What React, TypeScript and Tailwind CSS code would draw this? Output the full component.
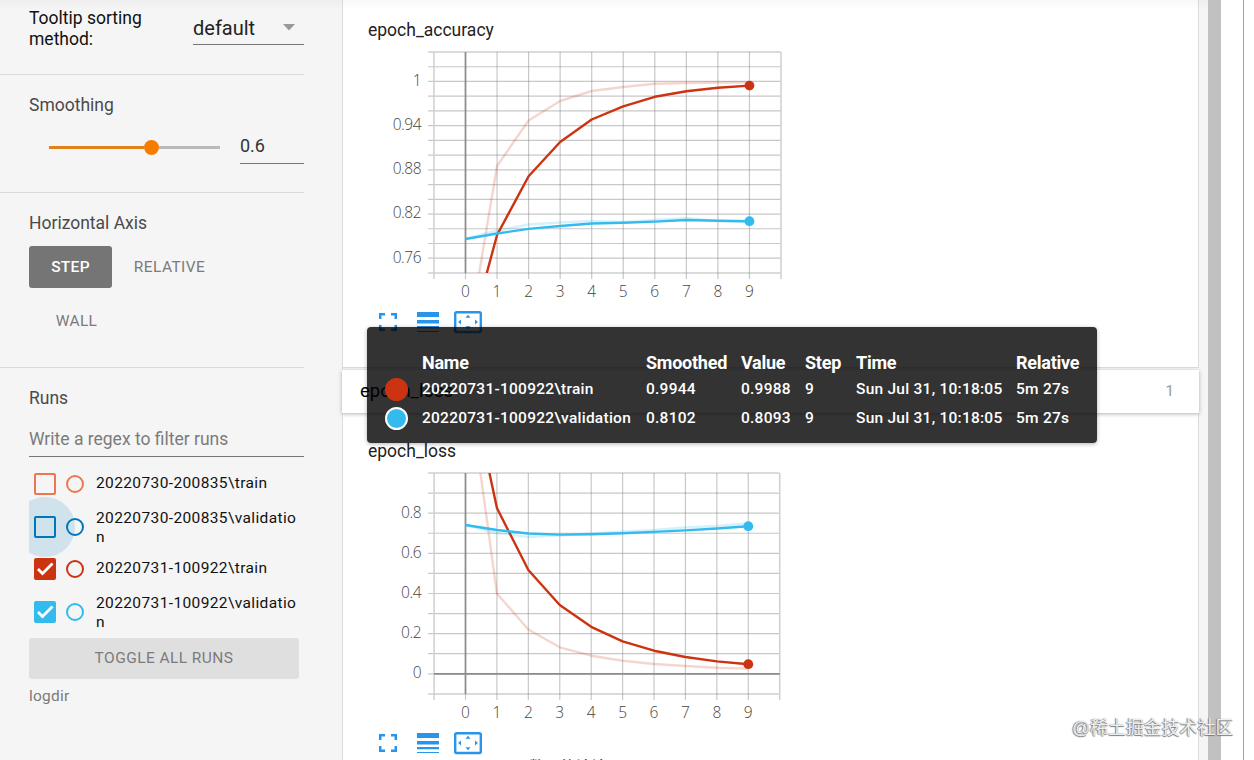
import { useId } from 'react';

// y positions of each series, in pixels from the top of the plot, one per epoch
const accuracy = {
  id: 'epoch_accuracy',
  step: 31.55,
  rows: 15,
  rowHeight: 14.73,
  ticks: [
    { label: '1', y: 29.3 },
    { label: '0.94', y: 73.5 },
    { label: '0.88', y: 117.7 },
    { label: '0.82', y: 161.9 },
    { label: '0.76', y: 206.1 },
  ],
  zero: null,
  series: [
    { color: '#cc3311', faint: true, ys: [303, 114, 68.5, 49, 39, 35, 31.7, 31, 30.5, 30.2] },
    { color: '#33bbee', faint: true, ys: [187, 178.5, 172.5, 170.5, 169, 170, 168, 166, 169, 170] },
    { color: '#cc3311', faint: false, ys: [300, 183, 124.3, 90, 67.5, 54.3, 44.8, 39.2, 35.8, 33.6] },
    { color: '#33bbee', faint: false, ys: [187, 181.5, 176.9, 174, 171.5, 170.8, 169.6, 168, 168.7, 169.2] },
  ],
};

const loss = {
  id: 'epoch_loss',
  step: 31.42,
  rows: 11,
  rowHeight: 20.08,
  ticks: [
    { label: '0.8', y: 40.2 },
    { label: '0.6', y: 80.3 },
    { label: '0.4', y: 120.5 },
    { label: '0.2', y: 160.6 },
    { label: '0', y: 200.8 },
  ],
  zero: 200.8,
  series: [
    { color: '#cc3311', faint: true, ys: [-110, 120.5, 156.5, 174.3, 182.7, 187.8, 191, 193, 194.7, 195.6] },
    { color: '#33bbee', faint: true, ys: [52, 60, 64, 62.5, 60.5, 58.5, 57, 54.5, 53, 50.5] },
    { color: '#cc3311', faint: false, ys: [-112, 35, 97, 132, 153.8, 168.3, 177.7, 184, 188.4, 191.2] },
    { color: '#33bbee', faint: false, ys: [52, 57, 60.5, 61.6, 61.2, 60.2, 58.9, 57.4, 55.5, 53.2] },
  ],
};

const runs = [
  { name: '20220730-200835\\train', color: '#ee7752', checked: false, ripple: false, height: 'h-[35px]' },
  { name: '20220730-200835\\validation', color: '#0077bb', checked: false, ripple: true, height: 'h-[50px]' },
  { name: '20220731-100922\\train', color: '#cc3311', checked: true, ripple: false, height: 'h-[35px]' },
  { name: '20220731-100922\\validation', color: '#33bbee', checked: true, ripple: false, height: 'h-[50px]' },
];

const points = [
  { color: '#cc3311', ring: false, name: '20220731-100922\\train', smoothed: '0.9944', value: '0.9988' },
  { color: '#33bbee', ring: true, name: '20220731-100922\\validation', smoothed: '0.8102', value: '0.8093' },
];

function Chart({ data }: { data: typeof accuracy | typeof loss }) {
  const clip = useId();
  const left = 66;
  const top = 8;
  const origin = 97.5;
  const bottom = top + data.rows * data.rowHeight;
  const right = origin + data.step * 10;

  return (
    <svg className="block font-['Open_Sans',sans-serif]" width="430" height="265">
      <clipPath id={clip}>
        <rect x={left} y={top} width={right - left + 8} height={bottom - top} />
      </clipPath>
      {Array.from({ length: data.rows + 1 }, (_, i) => {
        const y = top + i * data.rowHeight;
        const edge = i === 0 || i === data.rows;
        return (
          <line key={i} x1={left - 6} x2={right} y1={y} y2={y} stroke={edge ? '#cfcfcf' : '#808080'} strokeOpacity={edge ? 1 : 0.43} strokeWidth={edge ? 1.5 : 1.2} />
        );
      })}
      {Array.from({ length: 12 }, (_, i) => {
        const x = origin + (i - 1) * data.step;
        const edge = i === 0 || i === 11;
        return (
          <line key={i} x1={x} x2={x} y1={top} y2={bottom + 6} stroke={edge ? '#cfcfcf' : '#808080'} strokeOpacity={edge ? 1 : 0.43} strokeWidth={edge ? 1.5 : 1.2} />
        );
      })}
      <line x1={origin} x2={origin} y1={top} y2={bottom} stroke="#8c8c8c" strokeWidth="1.7" />
      {data.zero !== null && (
        <line x1={left} x2={right} y1={top + data.zero} y2={top + data.zero} stroke="#8c8c8c" strokeWidth="1.7" />
      )}
      <g clipPath={`url(#${clip})`}>
        {data.series.map((s, i) => (
          <polyline
            key={i}
            points={s.ys.map((y, x) => `${origin + x * data.step},${top + y}`).join(' ')}
            fill="none"
            stroke={s.color}
            strokeOpacity={s.faint ? 0.2 : 1}
            strokeWidth="2.4"
            strokeLinejoin="round"
          />
        ))}
      </g>
      {data.series
        .filter((s) => !s.faint)
        .map((s) => (
          <circle key={s.color} cx={origin + 9 * data.step} cy={top + s.ys[9]} r="4.9" fill={s.color} />
        ))}
      {data.ticks.map((t) => (
        <text key={t.label} x="53" y={top + t.y + 4.5} textAnchor="end" className="fill-[#444] text-[15.5px] font-light tracking-[-0.5px]">
          {t.label}
        </text>
      ))}
      {Array.from({ length: 10 }, (_, i) => (
        <text key={i} x={origin + i * data.step} y="253" textAnchor="middle" className="fill-[#444] text-[15.5px] font-light">
          {i}
        </text>
      ))}
    </svg>
  );
}

function ChartActions() {
  return (
    <div className="mt-px flex h-6 items-center pl-[10px] text-[#2894ea]">
      <svg width="20" height="20" viewBox="0 0 20 20" fill="none" stroke="currentColor" strokeWidth="2.5">
        <path d="M2.2 7V2.2H7M13 2.2h4.8V7M17.8 13v4.8H13M7 17.8H2.2V13" />
      </svg>
      <svg className="ml-[19px]" width="22" height="22" viewBox="0 0 22 22" fill="currentColor">
        <path d="M0 1h22v5H0zM0 9h22v3.5H0zM0 15h22v2.3H0zM0 20h22v1H0z" />
      </svg>
      <svg className="ml-[15px]" width="28" height="24" viewBox="0 0 28 24">
        <rect x="1.2" y="2.2" width="25.6" height="19.8" rx="1.6" fill="none" stroke="currentColor" strokeWidth="2.4" />
        <path d="M14 4.7l2.5 3h-5zM14 19.3l2.5-3h-5zM4 12l3-2.5v5zM24 12l-3-2.5v5z" fill="currentColor" />
      </svg>
    </div>
  );
}

function Sidebar() {
  return (
    <aside className="h-full w-[343px] shrink-0 border-r border-[#dcdcdc] bg-[#f5f5f5] text-[17.5px] text-[#4a4a4a]">
      <div className="flex h-[75px] w-[304px] justify-between border-b border-[#dadada] pl-[29px] pt-[8px]">
        <div className="w-[125px] leading-[21px] text-[#111]">Tooltip sorting method:</div>
        <div className="flex h-[37px] w-[111px] items-center justify-between border-b border-[#777] pr-[8px] text-[20px] text-[#222]">
          <span className="pt-[3px]">default</span>
          <svg className="mt-[3px]" width="14" height="7" viewBox="0 0 14 7">
            <path d="M1 0h12L7 6.5z" fill="#999" />
          </svg>
        </div>
      </div>
      <div className="h-[118px] w-[304px] border-b border-[#dadada] pl-[29px] pt-[19px]">
        <h3 className="leading-[22px]">Smoothing</h3>
        <div className="mt-[11px] flex h-[37px] items-end justify-between pl-[20px]">
          <div className="mb-[9px] flex h-[15px] items-center">
            <div className="h-[3px] w-[95px] bg-[#e2811b]" />
            <div className="size-[15px] rounded-full bg-[#f57c00]" />
            <div className="h-[3px] w-[61px] bg-[#bababa]" />
          </div>
          <div className="h-[30px] w-[64px] border-b border-[#777] text-[18px] leading-[24px] text-[#333]">0.6</div>
        </div>
      </div>
      <div className="h-[175px] w-[304px] border-b border-[#dadada] pl-[29px] pt-[19px]">
        <h3 className="leading-[22px]">Horizontal Axis</h3>
        <div className="mt-[12px] flex flex-wrap text-[15.5px] text-[#7b7b7b]">
          <button className="h-[42px] w-[83px] rounded-[3px] bg-[#757575] pt-px font-medium tracking-[0.3px] text-white">STEP</button>
          <button className="h-[42px] w-[115px] pt-px tracking-[0.4px]">RELATIVE</button>
          <button className="mt-[12px] h-[42px] w-[95px] pt-px tracking-[0.3px]">WALL</button>
        </div>
      </div>
      <div className="pl-[29px] pt-[19px]">
        <h3 className="leading-[22px]">Runs</h3>
        <div className="mt-[18px] h-[30px] w-[275px] border-b border-[#777] leading-[24px] text-[#7b7b7b]">
          Write a regex to filter runs
        </div>
        <div className="mt-[9px] w-[275px]">
          {runs.map((run) => (
            <div key={run.name} className={`relative flex items-center ${run.height}`}>
              {run.ripple && (
                <div className="absolute left-0 top-[-4px] h-[60px] w-[46px] overflow-hidden">
                  <div className="ml-[-14px] size-[60px] rounded-full bg-[#d0e3ed]" />
                </div>
              )}
              <div
                className="relative ml-[5px] mt-px flex size-[22px] items-center justify-center rounded-[2px] border-2"
                style={{ borderColor: run.color, backgroundColor: run.checked ? run.color : 'transparent' }}
              >
                {run.checked && (
                  <svg className="shrink-0" width="20" height="20" viewBox="0 0 20 20" fill="none" stroke="white" strokeWidth="2.8">
                    <path d="M3 10l4.5 4.5L17.5 4.5" />
                  </svg>
                )}
              </div>
              <div className="relative ml-[10px] mt-px size-[18px] rounded-full border-2" style={{ borderColor: run.color }} />
              <div
                className={`relative ml-[12px] w-[203px] break-all text-[15.5px] leading-[19px] tracking-[0.38px] text-[#111] ${
                  run.height === 'h-[50px]' ? 'pt-[3px]' : ''
                }`}
              >
                {run.name}
              </div>
            </div>
          ))}
        </div>
        <button className="mt-[2px] h-[41px] w-[270px] rounded-[3px] bg-[#dfdfdf] pt-px text-[15.5px] tracking-[0.43px] text-[#7b7b7b]">
          TOGGLE ALL RUNS
        </button>
        <div className="mt-[7px] text-[15.5px] leading-[20px] tracking-[0.25px] text-[#7b7b7b]">logdir</div>
      </div>
    </aside>
  );
}

function Tooltip() {
  return (
    <div className="absolute left-[367px] top-[327px] z-20 h-[116px] w-[730px] rounded-[4px] bg-black/80 pl-[18px] pt-[24px] text-white shadow-[0_1px_4px_rgba(0,0,0,0.3)]">
      <div className="grid grid-cols-[37px_224px_95px_64px_51px_160px_auto] text-[15.5px] font-medium tracking-[0.25px]">
        <div className="contents text-[18px] font-bold leading-[24px] tracking-[-0.25px]">
          <span />
          <span>Name</span>
          <span>Smoothed</span>
          <span>Value</span>
          <span>Step</span>
          <span>Time</span>
          <span>Relative</span>
        </div>
        {points.map((p) => (
          <div key={p.name} className="contents leading-[29px]">
            <span className="flex items-center">
              <span
                className="size-[23px] rounded-full border-2"
                style={{ backgroundColor: p.color, borderColor: p.ring ? 'white' : p.color }}
              />
            </span>
            <span>{p.name}</span>
            <span>{p.smoothed}</span>
            <span>{p.value}</span>
            <span>9</span>
            <span>Sun Jul 31, 10:18:05</span>
            <span>5m 27s</span>
          </div>
        ))}
      </div>
    </div>
  );
}

export default function App() {
  return (
    <div className="relative flex h-[760px] w-[1254px] overflow-hidden bg-white font-[Roboto,sans-serif]">
      <Sidebar />
      <main className="flex h-full w-[865px] shrink-0 flex-col bg-[#f5f5f5]">
        <section className="h-[368px] w-[856px] border-b border-r border-[#dcdcdc] bg-white pl-[25px] pt-[19px]">
          <h4 className="h-[25px] text-[17.5px] leading-[22px] text-[#222]">{accuracy.id}</h4>
          <Chart data={accuracy} />
          <ChartActions />
        </section>
        <div className="z-10 -ml-px mt-[2px] flex h-[43px] w-[857px] items-center justify-between bg-white pl-[18px] pr-[25px] shadow-[0_1px_4px_rgba(0,0,0,0.3)]">
          <span className="text-[18.5px] text-black">epoch_loss</span>
          <span className="text-[15px] text-[#999]">1</span>
        </div>
        <section className="w-[856px] flex-1 border-r border-[#dcdcdc] bg-white pl-[25px] pt-[27px]">
          <h4 className="h-[25px] text-[17.5px] leading-[22px] text-[#222]">{loss.id}</h4>
          <Chart data={loss} />
          <ChartActions />
        </section>
      </main>
      <div className="h-full w-[13px] bg-[#c1c1c1]" />
      <div className="h-full w-[23px] border-r border-[#a5a5a5]" />
      {/* shadow of the header above */}
      <div className="absolute left-0 top-0 h-[10px] w-[1208px] bg-gradient-to-b from-black/[0.03] to-transparent" />
      <Tooltip />
      {/* caption running off the bottom edge */}
      <div className="absolute left-[529px] top-[757px] h-[3px] overflow-hidden font-['Noto_Sans_CJK_SC',sans-serif] text-[15.5px] font-bold leading-[18px] text-[#555] blur-[0.5px]">
        数三的端端
      </div>
      <div className="absolute left-[1072px] top-[716px] z-20 whitespace-nowrap font-['Liberation_Sans','Noto_Sans_CJK_SC',sans-serif] text-[17.9px] leading-[24px] text-[#eee] [text-shadow:-1px_0_1px_#777,0_1px_1px_#777]">
        @稀土掘金技术社区
      </div>
    </div>
  );
}
